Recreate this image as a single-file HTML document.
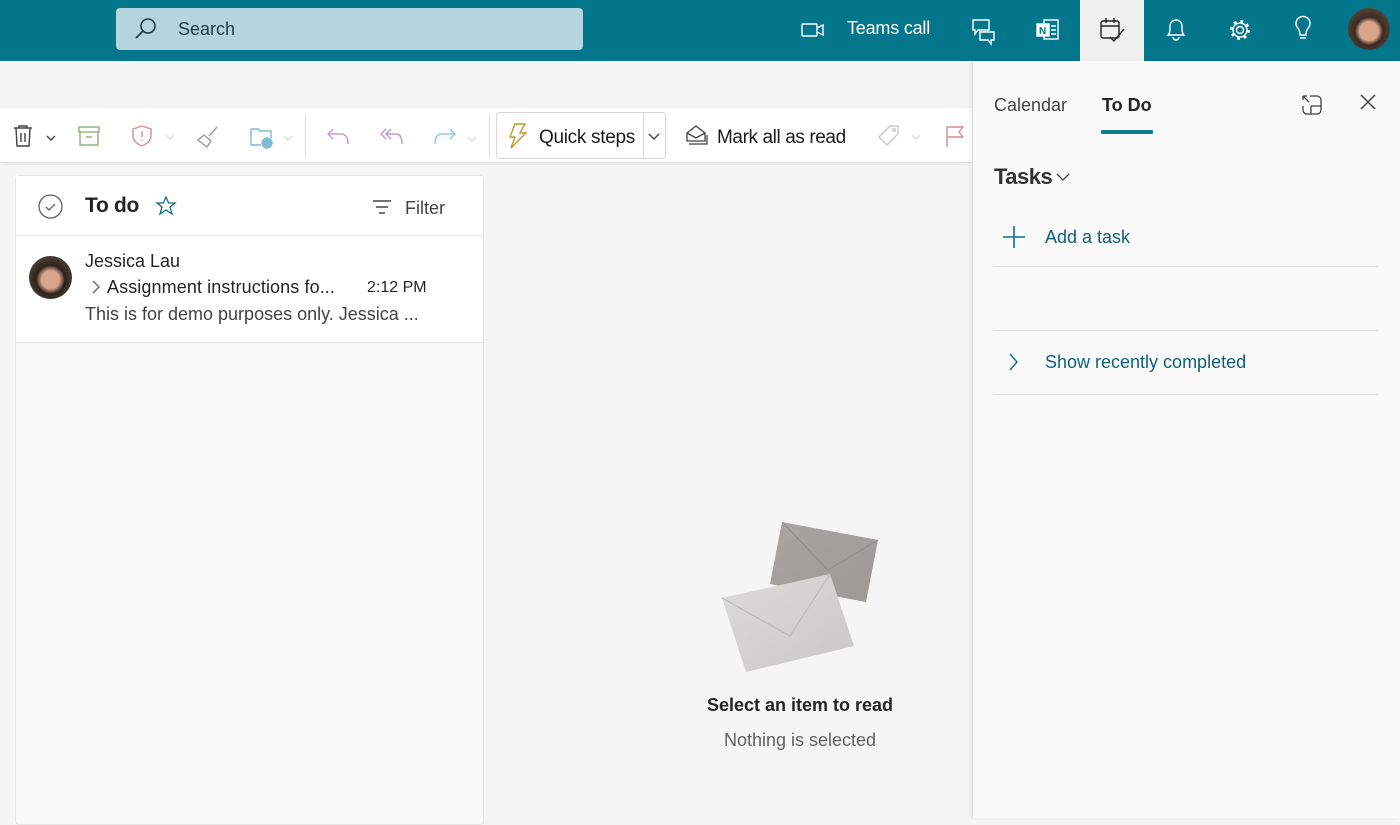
<!DOCTYPE html>
<html><head><meta charset="utf-8"><style>
*{box-sizing:border-box;margin:0;padding:0}
body{width:1400px;height:818px;overflow:hidden;background:#f5f5f5;font-family:"Liberation Sans",sans-serif;position:relative;color:#242424}
.a{position:absolute}
.hdr{left:0;top:0;width:1400px;height:61px;background:#04768b}
.t{white-space:nowrap}
svg{position:absolute;overflow:visible}
</style></head><body>
<div class="a hdr"></div>
<div class="a" style="left:116px;top:8px;width:467px;height:42px;background:#b4d5dd;border-radius:4px"></div>
<svg style="left:134px;top:18px" width="24" height="22" fill="none" stroke="#1b3a42" stroke-width="1.6"><circle cx="14" cy="8" r="7"/><path d="M9 13 L2 20"/></svg>
<div class="a t" style="left:178px;top:19px;font-size:18px;color:#1c3b43">Search</div>
<svg style="left:801px;top:22px" width="24" height="16" fill="none" stroke="#fff" stroke-width="1.4"><rect x="1" y="2" width="15" height="12" rx="1"/><path d="M16 6 L22 3 V13 L16 10"/></svg>
<div class="a t" style="left:847px;top:18px;font-size:18px;color:#fff;letter-spacing:-0.2px">Teams call</div>
<svg style="left:972px;top:19px" width="24" height="22" fill="none" stroke="#fff" stroke-width="1.4"><path d="M1 1 H17 V11 H6 L3 15 V11 H1 Z"/><path d="M8 13 H22 V21 H19 V25 L16 21 H8 Z"/></svg>
<svg style="left:1036px;top:19px" width="24" height="22" fill="none" stroke="#fff" stroke-width="1.4"><rect x="8" y="1" width="14" height="19"/><rect x="1" y="5" width="12" height="12" fill="#fff"/><text x="3" y="15" font-size="10" fill="#04768b" stroke="none" font-weight="bold">N</text><path d="M15 7H20M15 11H20M15 15H20"/></svg>
<div class="a" style="left:1080px;top:0;width:64px;height:61px;background:#efefef"></div>
<svg style="left:1100px;top:18px" width="26" height="24" fill="none" stroke="#242424" stroke-width="1.4"><rect x="1" y="3" width="18" height="17" rx="2"/><path d="M1 8H19M6 0V5M14 0V5M10 19L14 23L24 11"/></svg>
<svg style="left:1166px;top:18px" width="20" height="24" fill="none" stroke="#fff" stroke-width="1.4"><path d="M2 17 Q4 15 4 11 V8 A6 6 0 0 1 16 8 V11 Q16 15 18 17 Z M7 19 A3 3 0 0 0 13 19"/></svg>
<svg style="left:1228px;top:18px" width="24" height="24" fill="none" stroke="#fff" stroke-width="1.4"><circle cx="12" cy="12" r="3.5"/><circle cx="12" cy="12" r="8" stroke-width="4" stroke-dasharray="2.6 3.7"/><circle cx="12" cy="12" r="7" fill="#04768b" stroke="none"/><circle cx="12" cy="12" r="3.5"/><circle cx="12" cy="12" r="7"/></svg>
<svg style="left:1294px;top:17px" width="20" height="26" fill="none" stroke="#fff" stroke-width="1.4"><path d="M6 18 Q6 13 3 10 A7 7 0 1 1 15 10 Q12 13 12 18 Z M6 21 H12"/></svg>
<div class="a" style="left:1348px;top:8px;width:42px;height:42px;border-radius:50%;background:radial-gradient(circle at 50% 55%,#d9a58a 0 30%,#3a2a22 45%,#6e5b4a 100%)"></div>
<!-- toolbar -->
<div class="a" style="left:0;top:108px;width:972px;height:55px;background:#fff;border-bottom:1px solid #e0e0e0;box-shadow:0 1px 3px rgba(0,0,0,.08)"></div>
<svg style="left:13px;top:125px" width="50" height="24" fill="none" stroke="#424242" stroke-width="1.4"><path d="M1 3H19M6 3V1H14V3M3 3L4 21H16L17 3M8 8V17M12 8V17"/><path d="M34 11L38 15L42 11"/></svg>
<svg style="left:78px;top:126px" width="22" height="20" fill="none" stroke="#8fb07b" stroke-width="1.4"><rect x="1" y="1" width="20" height="5"/><path d="M2 6V19H20V6M8 11H14"/></svg>
<svg style="left:132px;top:125px" width="50" height="22" fill="none" stroke="#d49191" stroke-width="1.4"><path d="M10 1 L19 4 V11 Q19 17 10 21 Q1 17 1 11 V4 Z M10 6V12M10 15V16"/><path d="M34 10L38 14L42 10" stroke="#ddd"/></svg>
<svg style="left:196px;top:126px" width="24" height="22" fill="none" stroke="#9a9a9a" stroke-width="1.4"><path d="M21 1L13 10M8 9L15 15L11 21L2 14Z"/></svg>
<svg style="left:250px;top:126px" width="46" height="24" fill="none" stroke="#7fbcd6" stroke-width="1.4"><path d="M1 3H8L10 5H21V12M1 3V19H11"/><circle cx="17" cy="17" r="5" fill="#7fbcd6"/><path d="M34 10L38 14L42 10" stroke="#ddd"/></svg>
<div class="a" style="left:305px;top:115px;width:1px;height:42px;background:#ddd"></div>
<svg style="left:327px;top:128px" width="24" height="18" fill="none" stroke="#c79cc9" stroke-width="1.5"><path d="M6 1L1 6L6 11M1 6H14Q21 6 21 16"/></svg>
<svg style="left:380px;top:128px" width="26" height="18" fill="none" stroke="#c79cc9" stroke-width="1.5"><path d="M6 1L1 6L6 11M11 1L6 6L11 11M6 6H16Q22 6 22 16"/></svg>
<svg style="left:434px;top:128px" width="46" height="18" fill="none" stroke="#8ecbe0" stroke-width="1.5"><path d="M16 1L21 6L16 11M21 6H8Q1 6 1 16"/><path d="M34 9L38 13L42 9" stroke="#ddd"/></svg>
<div class="a" style="left:489px;top:115px;width:1px;height:42px;background:#ddd"></div>
<div class="a" style="left:496px;top:112px;width:170px;height:47px;border:1px solid #d6d6d6;border-radius:4px;background:#fff"></div>
<div class="a" style="left:643px;top:112px;width:1px;height:47px;background:#d6d6d6"></div>
<svg style="left:507px;top:123px" width="22" height="26" fill="none" stroke="#c4962c" stroke-width="1.4"><path d="M8 1H18L13 10H19L4 25L8 14H3Z"/></svg>
<div class="a t" style="left:539px;top:127px;font-size:19px;color:#1a1a1a;letter-spacing:-0.3px">Quick steps</div>
<svg style="left:648px;top:133px" width="12" height="8" fill="none" stroke="#424242" stroke-width="1.4"><path d="M1 1L6 6L11 1"/></svg>
<svg style="left:686px;top:125px" width="24" height="22" fill="none" stroke="#424242" stroke-width="1.3"><path d="M1 8L10 1L19 8V16H1Z M1 8L10 13L19 8M3 19H21V10"/></svg>
<div class="a t" style="left:717px;top:127px;font-size:19px;color:#1a1a1a;letter-spacing:-0.4px">Mark all as read</div>
<svg style="left:878px;top:125px" width="44" height="24" fill="none" stroke="#c8c8c8" stroke-width="1.4"><path d="M12 1H20V9L9 20L1 12Z"/><circle cx="16" cy="5" r="1.3"/><path d="M34 10L38 14L42 10" stroke="#ddd"/></svg>
<svg style="left:946px;top:126px" width="20" height="22" fill="none" stroke="#d48d8d" stroke-width="1.4"><path d="M1 21V1H17L13 6L17 11H1"/></svg>
<!-- list -->
<div class="a" style="left:15px;top:175px;width:469px;height:650px;background:#fafafa;border:1px solid #e6e6e6;border-radius:4px"></div>
<div class="a" style="left:16px;top:176px;width:467px;height:167px;background:#fff;border-bottom:1px solid #e6e6e6"></div>
<div class="a" style="left:16px;top:235px;width:467px;height:1px;background:#e6e6e6"></div>
<svg style="left:38px;top:194px" width="26" height="26" fill="none" stroke="#616161" stroke-width="1.3"><circle cx="12.5" cy="12.5" r="11.5"/><path d="M8 13L11 16L17 10"/></svg>
<div class="a t" style="left:85px;top:194px;font-size:21px;font-weight:bold;color:#242424;letter-spacing:-0.3px">To do</div>
<svg style="left:156px;top:196px" width="20" height="20" fill="none" stroke="#0f6c88" stroke-width="1.3"><path d="M10 1L12.6 7H19L14 11L16 18L10 14L4 18L6 11L1 7H7.4Z"/></svg>
<svg style="left:372px;top:200px" width="20" height="14" fill="none" stroke="#424242" stroke-width="1.4"><path d="M1 1H19M4 7H16M7 13H13"/></svg>
<div class="a t" style="left:405px;top:198px;font-size:18px;color:#424242">Filter</div>
<div class="a" style="left:29px;top:256px;width:43px;height:43px;border-radius:50%;background:radial-gradient(circle at 50% 55%,#d9a58a 0 28%,#2e221c 45%,#6a5a4e 100%)"></div>
<div class="a t" style="left:85px;top:251px;font-size:18px;color:#242424">Jessica Lau</div>
<svg style="left:92px;top:280px" width="8" height="14" fill="none" stroke="#616161" stroke-width="1.3"><path d="M1 1L7 7L1 13"/></svg>
<div class="a t" style="left:107px;top:277px;font-size:18px;color:#242424;letter-spacing:0.1px">Assignment instructions fo...</div>
<div class="a t" style="left:367px;top:279px;font-size:16px;color:#242424">2:12 PM</div>
<div class="a t" style="left:85px;top:304px;font-size:18px;color:#424242">This is for demo purposes only. Jessica ...</div>
<!-- empty state -->
<svg style="left:718px;top:518px" width="170" height="165">
<defs><linearGradient id="g1" x1="0" y1="0" x2="1" y2="1"><stop offset="0" stop-color="#a9a6a2"/><stop offset="1" stop-color="#9c9995"/></linearGradient><linearGradient id="g2" x1="0" y1="0" x2="1" y2="1"><stop offset="0" stop-color="#dcdbd9"/><stop offset="1" stop-color="#c9c8c6"/></linearGradient></defs>
<path d="M64 4 L160 22 L148 84 L52 66 Z" fill="url(#g1)"/>
<path d="M64 4 L110 52 L160 22" fill="none" stroke="#8f8c88" stroke-width="1"/>
<path d="M4 80 L112 56 L136 128 L28 154 Z" fill="url(#g2)"/>
<path d="M4 80 L72 118 L112 56" fill="none" stroke="#bdbcba" stroke-width="1.2"/>
</svg>
<div class="a t" style="left:600px;top:695px;width:400px;text-align:center;font-size:18px;font-weight:bold;color:#242424">Select an item to read</div>
<div class="a t" style="left:600px;top:730px;width:400px;text-align:center;font-size:18px;color:#616161">Nothing is selected</div>
<!-- right pane -->
<div class="a" style="left:972px;top:61px;width:428px;height:757px;background:#fafafa;border-left:1px solid #e0e0e0;box-shadow:-2px 0 4px rgba(0,0,0,.06)"></div>
<div class="a t" style="left:994px;top:95px;font-size:18px;color:#424242">Calendar</div>
<div class="a t" style="left:1102px;top:95px;font-size:18px;font-weight:bold;color:#242424">To Do</div>
<div class="a" style="left:1101px;top:130px;width:52px;height:4px;background:#0f7a8e;border-radius:1px"></div>
<svg style="left:1302px;top:95px" width="20" height="20" fill="none" stroke="#424242" stroke-width="1.3"><path d="M8 1H15A4 4 0 0 1 19 5V15A4 4 0 0 1 15 19H5A4 4 0 0 1 1 15V11M1 1L7 7M1 1V5M1 1H5M9 11V19M9 11H19"/></svg>
<svg style="left:1360px;top:94px" width="16" height="16" fill="none" stroke="#424242" stroke-width="1.5"><path d="M1 1L15 15M15 1L1 15"/></svg>
<div class="a t" style="left:994px;top:164px;font-size:22px;font-weight:bold;color:#333;letter-spacing:-0.5px">Tasks</div>
<svg style="left:1056px;top:173px" width="14" height="8" fill="none" stroke="#424242" stroke-width="1.3"><path d="M1 1L7 7L13 1"/></svg>
<svg style="left:1002px;top:225px" width="24" height="24" fill="none" stroke="#0f6c88" stroke-width="1.6"><path d="M12 1V23M1 12H23"/></svg>
<div class="a t" style="left:1045px;top:227px;font-size:18px;color:#0f5f77">Add a task</div>
<div class="a" style="left:994px;top:266px;width:384px;height:1px;background:#e0e0e0"></div>
<div class="a" style="left:994px;top:330px;width:384px;height:1px;background:#e0e0e0"></div>
<svg style="left:1009px;top:353px" width="9" height="18" fill="none" stroke="#0f6c88" stroke-width="1.4"><path d="M1 1L8 9L1 17"/></svg>
<div class="a t" style="left:1045px;top:352px;font-size:18px;color:#0f5f77">Show recently completed</div>
<div class="a" style="left:994px;top:394px;width:384px;height:1px;background:#e0e0e0"></div>
</body></html>
